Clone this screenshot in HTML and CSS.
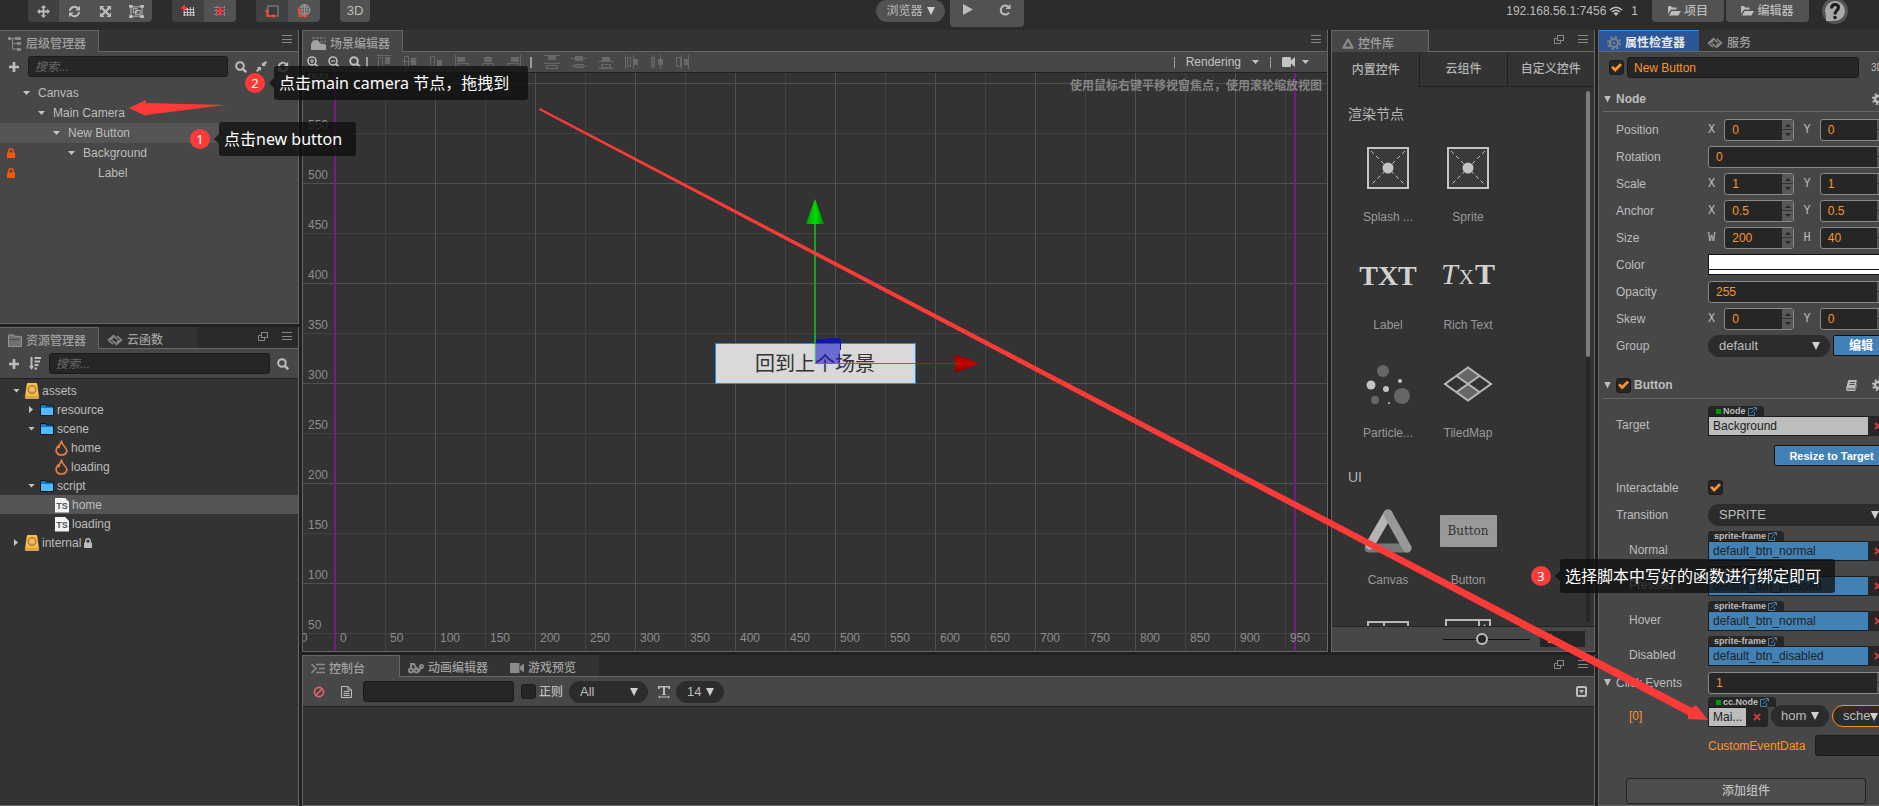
FILE: index.html
```html
<!DOCTYPE html>
<html lang="zh-CN">
<head>
<meta charset="utf-8">
<title>Cocos Creator</title>
<link rel="stylesheet" href="styles.css">
</head>
<body>
<svg class="defs" aria-hidden="true">
  <symbol id="i-move" viewBox="0 0 14 14"><path fill="currentColor" d="M7 0l3 3H8v3h3V4l3 3-3 3V8H8v3h2l-3 3-3-3h2V8H3v2L0 7l3-3v2h3V3H4z"/></symbol>
  <symbol id="i-refresh" viewBox="0 0 14 14"><path fill="none" stroke="currentColor" stroke-width="2" d="M2 6.500A5 5 0 0 1 11 4M12 7.500A5 5 0 0 1 3 10"/><path fill="currentColor" d="M13 .8V6H7.800zM1 13.200V8h5.200z"/></symbol>
  <symbol id="i-scale" viewBox="0 0 14 14"><path stroke="currentColor" stroke-width="2.400" d="M3 3l8 8M11 3l-8 8"/><path fill="currentColor" d="M1 1h5L1 6zM13 1v5L8 1zM1 13V8l5 5zM13 13H8l5-5z"/></symbol>
  <symbol id="i-rect" viewBox="0 0 16 14"><rect x="2" y="2" width="12" height="10" fill="none" stroke="currentColor"/><path fill="currentColor" d="M0 0h4v3H0zM12 0h4v3h-4zM0 11h4v3H0zM12 11h4v3h-4z"/><rect x="4.500" y="4" width="4" height="4" fill="none" stroke="currentColor"/><rect x="7" y="6" width="5" height="4" fill="none" stroke="currentColor"/></symbol>
  <symbol id="i-grid1" viewBox="0 0 14 12"><path stroke="#c4c4c4" fill="none" d="M3 4.500h10M2 7.500h12M2 10h12M3.500 4v7M6.500 3v8M9.500 2v9M12.500 2v9"/><path stroke="#f33" stroke-width="2" d="M0 3h6M3 0v6"/></symbol>
  <symbol id="i-grid2" viewBox="0 0 14 12"><path stroke="#898989" fill="none" stroke-dasharray="2 1" d="M1 2.500h12M1 5.500h12M1 9.500h12M3.500 1v10M11.500 1v10"/><path stroke="#f33" stroke-width="2" d="M3 6h8M7 2v8"/></symbol>
  <symbol id="i-local" viewBox="0 0 14 14"><rect x="3" y="2" width="10" height="10" fill="#3b3b3b" stroke="#8f8f8f"/><path fill="none" stroke="#f44" stroke-width="1.500" d="M2 6v6h7M.5 7.500L2 6l1.500 1.500M8 10.500L9.500 12 8 13.500"/></symbol>
  <symbol id="i-world" viewBox="0 0 14 14"><g fill="none" stroke="#9a9a9a"><circle cx="7.500" cy="6" r="5.500"/><ellipse cx="7.500" cy="6" rx="2.500" ry="5.500"/><path d="M2 6h11M3 3h9M3 9h9M7.500 0v12"/></g><path fill="none" stroke="#f44" stroke-width="1.500" d="M2 5v7h7M.5 6.500L2 5l1.500 1.500M8 10.500L9.500 12 8 13.500"/></symbol>
  <symbol id="i-play" viewBox="0 0 10 11"><path fill="currentColor" d="M0 0l10 5.500L0 11z"/></symbol>
  <symbol id="i-reload" viewBox="0 0 12 12"><path fill="none" stroke="currentColor" stroke-width="2" d="M10 8.500A4.500 4.500 0 1 1 9.500 3"/><path fill="currentColor" d="M11.500 0v5h-5z"/></symbol>
  <symbol id="i-wifi" viewBox="0 0 14 10"><path fill="none" stroke="currentColor" stroke-width="1.600" d="M1 4q6-5.500 12 0M3 6q4-3.500 8 0"/><path fill="currentColor" d="M4.500 7.200q2.500-2 5 0L7 10z"/></symbol>
  <symbol id="i-folder-open" viewBox="0 0 13 10"><path fill="currentColor" d="M0 8V1q0-1 1-1h2l1 1.500h4.500v2H3zM1 9.500L3.500 5H13l-2.500 4.500z"/></symbol>
  <symbol id="i-help" viewBox="0 0 26 26"><circle cx="13" cy="13" r="11.500" fill="#a9a9a9" stroke="#555" stroke-width="3"/><path fill="#a9a9a9" d="M4 15v8h8z"/><path fill="none" stroke="#1d1d1d" stroke-width="3" d="M9.500 10.500q0-4 3.500-4t3.500 3q0 1.500-1.800 3Q13 14 13 16.500"/><circle cx="13" cy="19.500" r="1.800" fill="#1d1d1d"/></symbol>
  <symbol id="i-tree" viewBox="0 0 14 14"><path fill="none" stroke="currentColor" d="M3 1.500h4M4.500 2v10h5M4.500 6.500h5"/><path fill="currentColor" d="M0 0h3v3H0zM7 0h6v3H7zM9 5h4v3H9zM9 11h4v3H9z"/></symbol>
  <symbol id="i-menu" viewBox="0 0 10 9"><path stroke="currentColor" d="M0 .5h10M0 4.500h10M0 7.500h10"/></symbol>
  <symbol id="i-pop" viewBox="0 0 10 9"><rect x="3.500" y=".5" width="6" height="5" fill="none" stroke="currentColor"/><path fill="none" stroke="currentColor" d="M3.500 3.500h-3v5h6v-3"/></symbol>
  <symbol id="i-plus" viewBox="0 0 10 10"><path fill="currentColor" d="M3.700 0h2.600v3.700H10v2.600H6.300V10H3.700V6.300H0V3.700h3.700z"/></symbol>
  <symbol id="i-search" viewBox="0 0 12 12"><circle cx="5" cy="5" r="3.800" fill="none" stroke="currentColor" stroke-width="2"/><path stroke="currentColor" stroke-width="2.400" d="M7.800 7.800L11.200 11.200"/></symbol>
  <symbol id="i-zin" viewBox="0 0 12 12"><circle cx="5" cy="5" r="4" fill="none" stroke="currentColor" stroke-width="1.600"/><path stroke="currentColor" stroke-width="2" d="M8 8l3 3"/><path stroke="currentColor" stroke-width="1.200" d="M3 5h4M5 3v4"/></symbol>
  <symbol id="i-zout" viewBox="0 0 12 12"><circle cx="5" cy="5" r="4" fill="none" stroke="currentColor" stroke-width="1.600"/><path stroke="currentColor" stroke-width="2" d="M8 8l3 3"/><path stroke="currentColor" stroke-width="1.200" d="M3 5h4"/></symbol>
  <symbol id="i-compress" viewBox="0 0 12 12"><path fill="currentColor" d="M6.500 1v4.500H11L9.600 4.100 12 1.500 10.500 0 7.900 2.400zM5.500 11V6.500H1l1.400 1.400L0 10.500 1.500 12l2.600-2.400z"/></symbol>
  <symbol id="i-lock" viewBox="0 0 8 10"><path fill="none" stroke="currentColor" stroke-width="1.500" d="M1.800 5V3q0-2.200 2.200-2.200T6.200 3v2"/><rect y="4.500" width="8" height="5.500" rx=".6" fill="currentColor"/></symbol>
  <symbol id="i-folder" viewBox="0 0 15 14"><path fill="#707070" stroke="#9a9a9a" d="M.5 13V1q0-.5.5-.5h5q1 0 1 1.500h7q.5 0 .5.5V13z"/><path stroke="#444" d="M2 5.500h11"/></symbol>
  <symbol id="i-link" viewBox="0 0 16 12"><path fill="none" stroke="currentColor" stroke-width="1.600" d="M6 10L1.500 6l5-4.500 4 4M10 2l4.500 4-5 4.500-4-4M3.500 6l3-2.500M12.500 6l-3 2.500"/></symbol>
  <symbol id="i-sort" viewBox="0 0 12 13"><path fill="currentColor" d="M1.500 0h2v9H5L2.500 13 0 9h1.500zM5.500 0H12v2H5.500zM5.500 3.500H11v2H5.500zM5.500 7h4v2h-4zM5.500 10.500H8v2H5.500z"/></symbol>
  <symbol id="i-db" viewBox="0 0 14 16"><path fill="#fdc04c" d="M3 0h8q1 0 1.200 1L14 14q0 2-2 2H2q-2 0-2-2L1.800 1Q2 0 3 0z"/><path fill="#dba445" d="M.2 12.500h13.600L14 14q0 2-2 2H2q-2 0-2-2z"/><circle cx="7" cy="6.500" r="3.800" fill="#f4b465" stroke="#a87326" stroke-width="1.300"/></symbol>
  <symbol id="i-dir" viewBox="0 0 14 12"><path fill="#0d7fd0" stroke="#151515" d="M.5 11.500V.5h5l1 1.500h7v9.500z"/><path fill="#4fbaff" d="M1 4h12v7H1z"/></symbol>
  <symbol id="i-fire" viewBox="0 0 13 16"><path fill="none" stroke="#e67d42" stroke-width="1.700" d="M6.500 1.500Q7 4 9.500 6.500t2.300 4.500q-.6 4-5.300 4t-5.300-4Q1 8 3 6l1.200 2Q4 4.500 6.500 1.500z"/></symbol>
  <symbol id="i-play-anim" viewBox="0 0 16 12"><g fill="none" stroke="currentColor" stroke-width="2"><circle cx="3" cy="8.500" r="2"/><circle cx="8.500" cy="8.500" r="2"/><circle cx="13.500" cy="4.500" r="1.500"/><path d="M3 6V2h3l2 4 3 3 2-3"/></g></symbol>
  <symbol id="i-cam" viewBox="0 0 14 10"><path fill="currentColor" d="M0 0h9.500v10H0zM14 .5v9L10 6.500v-3z"/></symbol>
  <symbol id="i-cam2" viewBox="0 0 13 10"><path fill="currentColor" d="M1.500 0h6Q9 0 9 1.500V3.500L13 0v10L9 6.500V8.500Q9 10 7.500 10h-6Q0 10 0 8.500v-7Q0 0 1.500 0z"/></symbol>
  <symbol id="i-console" viewBox="0 0 14 12"><path fill="none" stroke="currentColor" stroke-width="1.600" d="M.5 1L5 5.500.5 10M5 1.500h9M8 5.500h6M5 9.500h9"/></symbol>
  <symbol id="i-pic" viewBox="0 0 15 15"><path stroke="#686868" stroke-dasharray="3 1" stroke-width="2" d="M1 2h14M1 5.500h14"/><path fill="#a2a2a2" d="M0 14V8q2-4 5-4 2.500 0 4 3l2 1q2-1 4 1v5z"/></symbol>
  <symbol id="i-tri" viewBox="0 0 12 11"><path fill="none" stroke="currentColor" stroke-width="2.200" stroke-linejoin="round" d="M6 1.500L10.700 9.700H1.300z"/></symbol>
  <symbol id="i-gear" viewBox="0 0 14 14"><circle cx="7" cy="7" r="4" fill="none" stroke="currentColor" stroke-width="2"/><circle cx="7" cy="7" r="6" fill="none" stroke="currentColor" stroke-width="2" stroke-dasharray="2.400 2.310"/><circle cx="7" cy="7" r="1.200" fill="currentColor"/></symbol>
  <symbol id="i-cog" viewBox="0 0 12 12"><circle cx="6" cy="6" r="3" fill="none" stroke="currentColor" stroke-width="2.400"/><circle cx="6" cy="6" r="5" fill="none" stroke="currentColor" stroke-width="2" stroke-dasharray="1.960 1.960"/></symbol>
  <symbol id="i-book" viewBox="0 0 11 11"><path fill="currentColor" d="M3 0h7.500q.5 0 .4.600L9 8.500H2q-1 .2-.8 1h8L10.800 3v2L9.300 11H1.200Q-.2 10.500.1 8.500L2 1Q2.300 0 3 0z"/><path stroke="#474747" d="M4 2.500h5M3.500 4.500h5"/></symbol>
  <symbol id="i-ext" viewBox="0 0 9 9"><path fill="none" stroke="currentColor" d="M5 1.500H.5v7h6V5M3 6l5-5M5.500.5h3v3"/></symbol>
  <symbol id="i-x" viewBox="0 0 8 8"><path stroke="#c53b3b" stroke-width="2.200" d="M1 1l6 6M7 1L1 7"/></symbol>
  <symbol id="i-clear" viewBox="0 0 12 12"><circle cx="6" cy="6" r="4.600" fill="none" stroke="#e2656c" stroke-width="1.700"/><path stroke="#e2656c" stroke-width="1.700" d="M9 3L3 9"/></symbol>
  <symbol id="i-file" viewBox="0 0 11 12"><path fill="none" stroke="currentColor" d="M.5.5H7L10.500 4v7.500H.5zM7 .5V4h3.500M2.500 5.500h6M2.500 7.500h6M2.500 9.500h6"/></symbol>
  <symbol id="i-text" viewBox="0 0 12 12"><path fill="currentColor" d="M0 0h12v3h-1.500l-.3-1.500H7V8h1v1H4V8h1V1.500H1.800L1.500 3H0zM0 11l2-1.500v1h8v-1L12 11l-2 1.500v-1H2v1z"/></symbol>
  <symbol id="i-boxdown" viewBox="0 0 11 11"><rect x="1" y="1" width="9" height="9" rx="1" fill="none" stroke="currentColor" stroke-width="2"/><path fill="currentColor" d="M3 4h5L5.500 7.500z"/></symbol>
  <symbol id="i-al1" viewBox="0 0 14 14"><path d="M0 .5h14M1.500 2.500h4v10h-4z" fill="none" stroke="currentColor"/><path fill="currentColor" d="M8 2h5v7H8z"/></symbol>
  <symbol id="i-al2" viewBox="0 0 14 14"><path d="M0 6.500h14M1.500 1.500h4v11h-4z" fill="none" stroke="currentColor"/><path fill="currentColor" d="M8 3h5v7H8z"/></symbol>
  <symbol id="i-al3" viewBox="0 0 14 14"><path d="M0 13.500h14M1.500 1.500h4v10h-4z" fill="none" stroke="currentColor"/><path fill="currentColor" d="M8 5h5v7H8z"/></symbol>
  <symbol id="i-al4" viewBox="0 0 14 14"><path d="M.5 0v14M2.500 8.500h11v4h-11z" fill="none" stroke="currentColor"/><path fill="currentColor" d="M2 2h8v5H2z"/></symbol>
  <symbol id="i-al5" viewBox="0 0 14 14"><path d="M7 0v14M1.500 8.500h11v4h-11z" fill="none" stroke="currentColor"/><path fill="currentColor" d="M3 2h8v5H3z"/></symbol>
  <symbol id="i-al6" viewBox="0 0 14 14"><path d="M13.500 0v14M.5 8.500h11v4H.5z" fill="none" stroke="currentColor"/><path fill="currentColor" d="M4 2h8v5H4z"/></symbol>
  <symbol id="i-ds1" viewBox="0 0 16 14"><path d="M0 .5h16M0 8.500h16M2.500 10.500h11v3h-11z" fill="none" stroke="currentColor"/><path fill="currentColor" d="M4 1h8v4H4z"/></symbol>
  <symbol id="i-ds2" viewBox="0 0 16 14"><path d="M0 3.500h16M0 11h16M3.500 9.500h9v3h-9z" fill="none" stroke="currentColor"/><path fill="currentColor" d="M4 1h8v5H4z"/></symbol>
  <symbol id="i-ds3" viewBox="0 0 16 14"><path d="M0 6.500h16M0 13.500h16M3.500 9.500h9v3h-9z" fill="none" stroke="currentColor"/><path fill="currentColor" d="M4 2h8v4H4z"/></symbol>
  <symbol id="i-ds4" viewBox="0 0 14 14"><path d="M.5 0v14M8.500 0v14M2.500 2.500h3v9h-3z" fill="none" stroke="currentColor"/><path fill="currentColor" d="M9 4h4v6H9z"/></symbol>
  <symbol id="i-ds5" viewBox="0 0 14 14"><path d="M3 0v14M10.500 0v14M1.500 2.500h3v9h-3z" fill="none" stroke="currentColor"/><path fill="currentColor" d="M8 4h5v6H8z"/></symbol>
  <symbol id="i-ds6" viewBox="0 0 14 14"><path d="M6.500 0v14M13.500 0v14M1.500 2.500h4v9h-4z" fill="none" stroke="currentColor"/><path fill="currentColor" d="M9 4h4v6H9z"/></symbol>
  <symbol id="i-splash" viewBox="0 0 42 42"><rect x="1" y="1" width="40" height="40" fill="#3a3a3a" stroke="#c4c4c4" stroke-width="2"/><path stroke="#c4c4c4" stroke-dasharray="4 3" d="M4 4l34 34M38 4L4 38"/><circle cx="21" cy="21" r="5.500" fill="#c4c4c4"/></symbol>
  <symbol id="i-particle" viewBox="0 0 44 40"><g fill="#666"><circle cx="17" cy="7" r="6"/><circle cx="36" cy="32" r="8"/><circle cx="9" cy="36" r="4"/></g><g fill="#c4c4c4"><circle cx="5" cy="21" r="4.500"/><circle cx="20" cy="25" r="3"/><circle cx="34" cy="17" r="2"/><circle cx="23" cy="39" r="1"/></g></symbol>
  <symbol id="i-tiled" viewBox="0 0 50 36"><path fill="#666" d="M25 2l11 8-11 8-11-8zM25 18l11 8-11 8-11-8z"/><path fill="none" stroke="#b8b8b8" stroke-width="2" d="M25 1.500L48 18 25 34.500 2 18zM13.500 10L36.500 26M36.500 10L13.500 26"/></symbol>
  <symbol id="i-canvas" viewBox="0 0 48 44"><path stroke="#777" stroke-width="9" stroke-linecap="round" d="M5 39h38"/><path stroke="#b5b5b5" stroke-width="9" stroke-linecap="round" d="M24 5L6 36"/><path stroke="#999" stroke-width="9" stroke-linecap="round" d="M24 5l19 34"/></symbol>
  <symbol id="i-layout" viewBox="0 0 42 36"><path fill="none" stroke="#b8b8b8" stroke-width="2" d="M1 1h40v34H1zM17 1v34"/></symbol>
  <symbol id="i-scroll" viewBox="0 0 46 40"><path fill="none" stroke="#b8b8b8" stroke-width="2" d="M1 1h44v38H1zM34 1v38"/><path fill="#b8b8b8" d="M37 9l2.500-4L42 9z"/></symbol>
</svg>

<div class="app">
  <header class="topbar">
    <div class="tb-left">
      <div class="group"><button class="on" aria-label="移动"><svg width="13" height="13"><use href="#i-move"/></svg></button><button aria-label="旋转"><svg width="13" height="13"><use href="#i-refresh"/></svg></button><button aria-label="缩放"><svg width="13" height="13"><use href="#i-scale"/></svg></button><button aria-label="矩形"><svg width="15" height="13"><use href="#i-rect"/></svg></button></div>
      <div class="group"><button class="on" aria-label="锚点"><svg width="14" height="12"><use href="#i-grid1"/></svg></button><button aria-label="中心"><svg width="14" height="12"><use href="#i-grid2"/></svg></button></div>
      <div class="group"><button class="on" aria-label="本地"><svg width="14" height="14"><use href="#i-local"/></svg></button><button aria-label="世界"><svg width="14" height="14"><use href="#i-world"/></svg></button></div>
      <div class="group"><button class="b3d">3D</button></div>
    </div>
    <div class="tb-mid">
      <label class="sel sel-top"><select aria-label="预览平台"><option>浏览器</option></select></label>
      <div class="group play"><button aria-label="播放"><svg width="10" height="11"><use href="#i-play"/></svg></button><button aria-label="刷新"><svg width="12" height="12"><use href="#i-reload"/></svg></button></div>
    </div>
    <div class="tb-right">
      <span class="ip">192.168.56.1:7456</span><svg class="wifi" width="14" height="10"><use href="#i-wifi"/></svg><span class="cnt">1</span>
      <button class="tbtn"><svg width="13" height="10"><use href="#i-folder-open"/></svg>项目</button><button class="tbtn wide"><svg width="13" height="10"><use href="#i-folder-open"/></svg>编辑器</button>
      <button class="help" aria-label="帮助"><svg width="26" height="26"><use href="#i-help"/></svg></button>
    </div>
  </header>

  <main class="dock">
    <div class="col-left">
      <section class="panel">
        <div class="tabs"><button class="tab on"><svg width="14" height="14"><use href="#i-tree"/></svg>层级管理器</button><div class="rest"><svg width="10" height="9"><use href="#i-menu"/></svg></div></div>
        <div class="bar hbar"><button class="ib" aria-label="新建"><svg width="10" height="10"><use href="#i-plus"/></svg></button><input class="search" type="text" placeholder="搜索..." aria-label="搜索节点"><button class="ib" aria-label="搜索"><svg width="12" height="12"><use href="#i-search"/></svg></button><button class="ib" aria-label="折叠"><svg width="11" height="11"><use href="#i-compress"/></svg></button><button class="ib" aria-label="刷新"><svg width="12" height="12"><use href="#i-refresh"/></svg></button></div>
        <ul class="tree nodes">
          <li class="d0"><i class="lk"></i><i class="car"></i>Canvas</li>
          <li class="d1"><i class="lk"></i><i class="car"></i>Main Camera</li>
          <li class="d2 sel-row"><i class="lk"></i><i class="car"></i>New Button</li>
          <li class="d3"><i class="lk"><svg width="8" height="10"><use href="#i-lock"/></svg></i><i class="car"></i>Background</li>
          <li class="d4"><i class="lk"><svg width="8" height="10"><use href="#i-lock"/></svg></i><i class="car none"></i>Label</li>
        </ul>
      </section>
      <section class="panel dark">
        <div class="tabs"><button class="tab on"><svg width="14" height="14"><use href="#i-folder"/></svg>资源管理器</button><button class="tab w98"><svg width="16" height="12"><use href="#i-link"/></svg>云函数</button><div class="rest deep"><svg width="10" height="9"><use href="#i-pop"/></svg><svg width="10" height="9"><use href="#i-menu"/></svg></div></div>
        <div class="bar abar"><button class="ib" aria-label="新建"><svg width="10" height="10"><use href="#i-plus"/></svg></button><button class="ib" aria-label="排序"><svg width="12" height="13"><use href="#i-sort"/></svg></button><input class="search" type="text" placeholder="搜索..." aria-label="搜索资源"><button class="ib" aria-label="搜索"><svg width="12" height="12"><use href="#i-search"/></svg></button></div>
        <ul class="tree assets">
          <li class="d0"><i class="car"></i><svg width="14" height="16"><use href="#i-db"/></svg>assets</li>
          <li class="d1"><i class="car shut"></i><svg width="14" height="12"><use href="#i-dir"/></svg>resource</li>
          <li class="d1"><i class="car"></i><svg width="14" height="12"><use href="#i-dir"/></svg>scene</li>
          <li class="d2"><i class="car none"></i><svg width="13" height="16"><use href="#i-fire"/></svg>home</li>
          <li class="d2"><i class="car none"></i><svg width="13" height="16"><use href="#i-fire"/></svg>loading</li>
          <li class="d1"><i class="car"></i><svg width="14" height="12"><use href="#i-dir"/></svg>script</li>
          <li class="d2 sel-row"><i class="car none"></i><span class="ts">TS</span>home</li>
          <li class="d2"><i class="car none"></i><span class="ts">TS</span>loading</li>
          <li class="d0"><i class="car shut"></i><svg width="14" height="16"><use href="#i-db"/></svg>internal<svg class="lk2" width="8" height="10"><use href="#i-lock"/></svg></li>
        </ul>
      </section>
    </div>

    <div class="col-mid">
      <div class="mid-top">
        <section class="panel dark lb">
          <div class="tabs"><button class="tab on"><svg width="15" height="15"><use href="#i-pic"/></svg>场景编辑器</button><div class="rest"><svg width="10" height="9"><use href="#i-menu"/></svg></div></div>
          <div class="bar sbar">
            <svg width="12" height="12"><use href="#i-zin"/></svg><svg width="12" height="12"><use href="#i-zout"/></svg><svg width="12" height="12"><use href="#i-search"/></svg><i class="sep"></i>
            <span class="aligns"><svg width="14" height="14"><use href="#i-al1"/></svg><svg width="14" height="14"><use href="#i-al2"/></svg><svg width="14" height="14"><use href="#i-al3"/></svg><svg width="14" height="14"><use href="#i-al4"/></svg><svg width="14" height="14"><use href="#i-al5"/></svg><svg width="14" height="14"><use href="#i-al6"/></svg></span><i class="sep"></i>
            <span class="aligns spread"><svg width="16" height="14"><use href="#i-ds1"/></svg><svg width="16" height="14"><use href="#i-ds2"/></svg><svg width="16" height="14"><use href="#i-ds3"/></svg><svg width="14" height="14"><use href="#i-ds4"/></svg><svg width="14" height="14"><use href="#i-ds5"/></svg><svg width="14" height="14"><use href="#i-ds6"/></svg></span>
            <span class="sright"><i class="sep"></i><span>Rendering</span><i class="car"></i><i class="sep"></i><span class="cam"><svg width="13" height="10"><use href="#i-cam2"/></svg><i class="car"></i></span></span>
          </div>
          <div class="scene">
            <svg class="view" width="100%" height="100%">
              <defs>
                <pattern id="fine" width="100" height="100" x="32" y="10" patternUnits="userSpaceOnUse"><path stroke="#424242" stroke-width="1" d="M50.500 0v100M0 50.500h100"/><path stroke="#505050" stroke-width="1" d="M.5 0v100M0 .5h100"/></pattern>
                <linearGradient id="gg"><stop offset="0" stop-color="#009a00"/><stop offset=".5" stop-color="#00dd00"/><stop offset="1" stop-color="#008a00"/></linearGradient>
                <linearGradient id="rg" x2="0" y2="1"><stop offset="0" stop-color="#8d0000"/><stop offset=".5" stop-color="#cc0000"/><stop offset="1" stop-color="#7d0000"/></linearGradient>
              </defs>
              <rect width="100%" height="100%" fill="url(#fine)"/>
              <path stroke="#761c86" stroke-width="2" d="M32 0v580M992 0v580"/>
              <g class="ruler">
                <text x="5" y="6">600</text><text x="5" y="56">550</text><text x="5" y="106">500</text><text x="5" y="156">450</text><text x="5" y="206">400</text><text x="5" y="256">350</text><text x="5" y="306">300</text><text x="5" y="356">250</text><text x="5" y="406">200</text><text x="5" y="456">150</text><text x="5" y="506">100</text><text x="5" y="556">50</text>
                <text x="-13" y="569">-50</text><text x="37" y="569">0</text><text x="87" y="569">50</text><text x="137" y="569">100</text><text x="187" y="569">150</text><text x="237" y="569">200</text><text x="287" y="569">250</text><text x="337" y="569">300</text><text x="387" y="569">350</text><text x="437" y="569">400</text><text x="487" y="569">450</text><text x="537" y="569">500</text><text x="587" y="569">550</text><text x="637" y="569">600</text><text x="687" y="569">650</text><text x="737" y="569">700</text><text x="787" y="569">750</text><text x="837" y="569">800</text><text x="887" y="569">850</text><text x="937" y="569">900</text><text x="987" y="569">950</text>
              </g>
              <rect x="412.500" y="270.500" width="200" height="40" fill="#d9d9d9" stroke="#1a90e8"/>
              <text class="gbtn" x="512" y="298" text-anchor="middle">回到上个场景</text>
              <path fill="#1212c8" fill-opacity=".55" d="M512 266h25v24h-25z"/><path fill="#1414a8" d="M512 266h13v-1h13v12h-1v-7h-25z"/>
              <path stroke="#1da01d" stroke-width="2" d="M512 150v121"/><path stroke="#6adf6a" stroke-width="1" d="M512 271v20"/>
              <path stroke="#e04040" d="M512 290.500h101"/><path stroke="#b01818" d="M613 290.500h40"/>
              <path fill="url(#gg)" d="M512 126l9 25h-18z"/><path fill="url(#rg)" d="M676 290.500l-24-9.500v19z"/>
            </svg>
            <p class="hint">使用鼠标右键平移视窗焦点，使用滚轮缩放视图</p>
          </div>
        </section>

        <section class="panel dark lb widgets">
          <div class="tabs"><button class="tab on w97"><svg width="12" height="11"><use href="#i-tri"/></svg>控件库</button><div class="rest"><svg width="10" height="9"><use href="#i-pop"/></svg><svg width="10" height="9"><use href="#i-menu"/></svg></div></div>
          <div class="subtabs"><button class="on">内置控件</button><button>云组件</button><button>自定义控件</button></div>
          <div class="wscroll">
            <div class="wlist">
              <h3>渲染节点</h3>
              <div class="wgrid">
                <figure><div><svg width="42" height="42"><use href="#i-splash"/></svg></div><figcaption>Splash ...</figcaption></figure>
                <figure><div><svg width="42" height="42"><use href="#i-splash"/></svg></div><figcaption>Sprite</figcaption></figure>
                <figure><div class="txt">TXT</div><figcaption>Label</figcaption></figure>
                <figure><div class="txt"><span class="rich"><em>T</em><small>X</small><strong>T</strong></span></div><figcaption>Rich Text</figcaption></figure>
                <figure><div><svg width="44" height="40"><use href="#i-particle"/></svg></div><figcaption>Particle...</figcaption></figure>
                <figure><div><svg width="50" height="36"><use href="#i-tiled"/></svg></div><figcaption>TiledMap</figcaption></figure>
              </div>
              <h3>UI</h3>
              <div class="wgrid">
                <figure><div><svg width="48" height="44"><use href="#i-canvas"/></svg></div><figcaption>Canvas</figcaption></figure>
                <figure><div><span class="wbtn">Button</span></div><figcaption>Button</figcaption></figure>
                <figure><div><svg width="42" height="36"><use href="#i-layout"/></svg></div></figure>
                <figure><div><svg width="46" height="40"><use href="#i-scroll"/></svg></div></figure>
              </div>
            </div>
            <div class="track"><i></i></div>
          </div>
          <div class="wfoot"><input type="range" min="0" max="100" value="44" aria-label="图标大小"><input class="wnum" type="text" value="1" aria-label="缩放值"></div>
        </section>
      </div>

      <section class="panel dark lb">
        <div class="tabs"><button class="tab on w97"><svg width="14" height="12"><use href="#i-console"/></svg>控制台</button><button class="tab w102"><svg width="16" height="12"><use href="#i-play-anim"/></svg>动画编辑器</button><button class="tab w97"><svg width="14" height="10"><use href="#i-cam"/></svg>游戏预览</button><div class="rest deep"><svg width="10" height="9"><use href="#i-pop"/></svg><svg width="10" height="9"><use href="#i-menu"/></svg></div></div>
        <div class="bar cbar">
          <button class="ib" aria-label="清空"><svg width="12" height="12"><use href="#i-clear"/></svg></button><button class="ib" aria-label="日志"><svg width="11" height="12"><use href="#i-file"/></svg></button>
          <input class="search filter" type="text" aria-label="过滤">
          <label class="chk"><input type="checkbox">正则</label>
          <label class="sel sel-all"><select aria-label="日志级别"><option>All</option></select></label>
          <svg class="ti" width="12" height="12"><use href="#i-text"/></svg>
          <label class="sel sel-14"><select aria-label="字号"><option>14</option></select></label>
          <button class="ib last" aria-label="合并"><svg width="11" height="11"><use href="#i-boxdown"/></svg></button>
        </div>
        <div class="log"></div>
      </section>
    </div>

    <section class="panel lb insp">
      <div class="tabs"><button class="tab blue"><svg width="14" height="14"><use href="#i-gear"/></svg>属性检查器</button><button class="tab"><svg width="16" height="12"><use href="#i-link"/></svg>服务</button><div class="rest"></div></div>
      <div class="ibody">
        <div class="name"><input type="checkbox" checked aria-label="激活"><input class="field" type="text" value="New Button" aria-label="节点名"><span>3D</span></div>
        <h2 class="sect top"><i class="tri"></i>Node<svg class="cog" width="12" height="12"><use href="#i-cog"/></svg></h2>
        <div class="rows">
          <div class="row"><span class="lab">Position</span><div class="xy"><label>X<span class="num"><input value="0"><i></i></span></label><label>Y<span class="num"><input value="0"><i></i></span></label></div></div>
          <div class="row"><label class="lab" for="rot">Rotation</label><span class="num"><input id="rot" value="0"><i></i></span></div>
          <div class="row"><span class="lab">Scale</span><div class="xy"><label>X<span class="num"><input value="1"><i></i></span></label><label>Y<span class="num"><input value="1"><i></i></span></label></div></div>
          <div class="row"><span class="lab">Anchor</span><div class="xy"><label>X<span class="num"><input value="0.5"><i></i></span></label><label>Y<span class="num"><input value="0.5"><i></i></span></label></div></div>
          <div class="row"><span class="lab">Size</span><div class="xy"><label>W<span class="num"><input value="200"><i></i></span></label><label>H<span class="num"><input value="40"><i></i></span></label></div></div>
          <div class="row"><span class="lab">Color</span><button class="color" aria-label="Color"><i></i></button></div>
          <div class="row"><label class="lab" for="opa">Opacity</label><span class="num"><input id="opa" value="255"><i></i></span></div>
          <div class="row"><span class="lab">Skew</span><div class="xy"><label>X<span class="num"><input value="0"><i></i></span></label><label>Y<span class="num"><input value="0"><i></i></span></label></div></div>
          <div class="row"><label class="lab" for="grp">Group</label><span class="sel grp"><select id="grp"><option>default</option></select></span><button class="blueb edit">编辑</button></div>
        </div>
        <h2 class="sect comp"><i class="tri"></i><input type="checkbox" checked aria-label="启用 Button">Button<svg class="book" width="11" height="11"><use href="#i-book"/></svg><svg class="cog" width="12" height="12"><use href="#i-cog"/></svg></h2>
        <div class="ref first"><span class="lab">Target</span><div class="slot node"><span class="tag"><b></b>Node<svg width="9" height="9"><use href="#i-ext"/></svg></span><span class="val">Background</span><button class="del" aria-label="移除"><svg width="8" height="8"><use href="#i-x"/></svg></button></div></div>
        <button class="blueb resize">Resize to Target</button>
        <div class="rows two">
          <div class="row"><label class="lab" for="inter">Interactable</label><input id="inter" type="checkbox" checked></div>
          <div class="row"><label class="lab" for="tran">Transition</label><span class="sel tran"><select id="tran"><option>SPRITE</option></select></span></div>
        </div>
        <div class="refs">
          <div class="ref in"><span class="lab">Normal</span><div class="slot"><span class="tag">sprite-frame<svg width="9" height="9"><use href="#i-ext"/></svg></span><span class="val">default_btn_normal</span><button class="del" aria-label="移除"><svg width="8" height="8"><use href="#i-x"/></svg></button></div></div>
          <div class="ref in"><span class="lab">Pressed</span><div class="slot"><span class="tag">sprite-frame<svg width="9" height="9"><use href="#i-ext"/></svg></span><span class="val">default_btn_pressed</span><button class="del" aria-label="移除"><svg width="8" height="8"><use href="#i-x"/></svg></button></div></div>
          <div class="ref in"><span class="lab">Hover</span><div class="slot"><span class="tag">sprite-frame<svg width="9" height="9"><use href="#i-ext"/></svg></span><span class="val">default_btn_normal</span><button class="del" aria-label="移除"><svg width="8" height="8"><use href="#i-x"/></svg></button></div></div>
          <div class="ref in"><span class="lab">Disabled</span><div class="slot"><span class="tag">sprite-frame<svg width="9" height="9"><use href="#i-ext"/></svg></span><span class="val">default_btn_disabled</span><button class="del" aria-label="移除"><svg width="8" height="8"><use href="#i-x"/></svg></button></div></div>
        </div>
        <div class="rows ev"><div class="row"><i class="tri"></i><label class="lab" for="cev">Click Events</label><span class="num"><input id="cev" value="1"><i></i></span></div></div>
        <div class="ref in evt"><span class="lab hot">[0]</span><div class="slot node small"><span class="tag"><b></b>cc.Node<svg width="9" height="9"><use href="#i-ext"/></svg></span><span class="val">Mai...</span><button class="del" aria-label="移除"><svg width="8" height="8"><use href="#i-x"/></svg></button></div><span class="sel s1"><select aria-label="组件"><option>home</option></select></span><span class="sel s2"><select aria-label="函数"><option>sche</option></select></span></div>
        <div class="custom"><label for="ced">CustomEventData</label><input id="ced" class="field" type="text"></div>
        <button class="add">添加组件</button>
      </div>
    </section>
  </main>
</div>

<div class="notes">
  <svg width="100%" height="100%"><path fill="#fc3a38" d="M225 105L146 115v1l-17-8 17-8v3zM539 110l1-2L1692 708l4-3 12 15-20-1 0-4z"/></svg>
  <div class="note n1"><b>1</b><span>点击new button</span></div>
  <div class="note n2"><b>2</b><span>点击main camera 节点，拖拽到</span></div>
  <div class="note n3"><b>3</b><span>选择脚本中写好的函数进行绑定即可</span></div>
</div>
</body>
</html>
```
FILE: styles.css
```css
* { box-sizing: border-box; }
html, body { height: 100%; }
body {
  margin: 0; overflow: hidden; background: #202020; color: #bdbdbd;
  font: 12px/16px "Liberation Sans", "Noto Sans CJK SC", sans-serif;
}
button, input, select { font: inherit; color: inherit; margin: 0; padding: 0; border: 0; background: none; border-radius: 0; outline: 0; }
svg { display: block; flex: none; }
.defs { position: absolute; width: 0; height: 0; }
i { font-style: normal; }

/* the inspector's right edge runs past the window */
.app { display: flex; flex-direction: column; width: calc(100% + 20px); height: 100vh; }

/* top bar */
.topbar { display: grid; grid-template-columns: 1fr auto 1fr; height: 30px; flex: none; background: #2c2c2c; }
.tb-left { display: flex; gap: 20px; padding-left: 28px; }
.group { display: flex; height: 22px; background: #525252; border-radius: 0 0 4px 4px; overflow: hidden; }
.group button { width: 32px; display: grid; place-items: center; }
.group:first-child button { width: 31px; }
.group button.on { background: #414141; }
.group .b3d { width: 30px; font-size: 13px; }
.tb-mid { display: flex; gap: 5px; }
.play { height: 27px; }
.play button { width: 37px; padding-bottom: 8px; }
.tb-right { display: flex; justify-content: flex-end; padding-right: 51px; height: 22px; align-items: center; }
.wifi { margin: 0 8px 0 3px; }
.cnt { margin-right: 14px; }
.tbtn { width: 72px; height: 22px; display: flex; align-items: center; justify-content: center; gap: 3px; background: #525252; border-radius: 0 0 4px 4px; margin-right: 2px; font-weight: 500; }
.tbtn.wide { width: 83px; margin-right: 13px; }

/* selects */
.sel { position: relative; display: block; height: 22px; background: #2c2c2c; border-radius: 11px; }
.sel select { appearance: none; width: 100%; height: 100%; padding-left: 11px; font-size: 13px; }
.sel::after { content: ""; position: absolute; right: 10px; top: 7px; border: 4px solid transparent; border-top: 8px solid #cfcfcf; border-bottom: 0; pointer-events: none; }
.sel-top { width: 69px; background: #525252; }
.sel-top select { font-size: 12px; }

/* dock */
.dock { flex: 1; min-height: 0; display: grid; grid-template-columns: 299px minmax(0, 1fr) 301px; gap: 3px; }
.col-left { display: grid; grid-template-rows: 294fr 479fr; gap: 3px; min-height: 0; }
.col-mid { display: grid; grid-template-rows: 622fr 151fr; gap: 3px; min-height: 0; min-width: 0; }
.mid-top { display: grid; grid-template-columns: minmax(0, 1fr) 264px; gap: 3px; min-height: 0; }
.panel { display: flex; flex-direction: column; min-height: 0; min-width: 0; overflow: hidden; background: #474747; border: 1px solid #666; border-width: 0 1px 1px 0; }
.panel.lb { border-left-width: 1px; }
.panel.dark { background: #333; }
.tabs { display: flex; height: 22px; flex: none; background: #333; }
.tab { display: flex; align-items: center; gap: 4px; padding: 4px 12px 0 8px; color: #a0a0a0; font-weight: 500; border-bottom: 1px solid #666; white-space: nowrap; }
.tab.on { background: #474747; border: 1px solid #666; border-width: 1px 1px 0 0; }
.tab.blue { background: #2c5698; color: #e8e8e8; border-top: 1px solid #2f8ae8; padding-right: 14px; font-weight: 700; }
.tab.blue svg { color: #7b8187; }
.tab svg { color: #8a8a8a; }
.widgets .tab { padding-left: 10px; }
.w97 { width: 97px; } .w98 { width: 98px; } .w102 { width: 102px; }
.rest { flex: 1; display: flex; justify-content: flex-end; gap: 14px; padding: 5px 6px 0 0; border-bottom: 1px solid #666; color: #888; }
.rest.deep { background: #2a2a2a; }
.bar { display: flex; align-items: center; flex: none; background: #474747; }
.ib { display: grid; place-items: center; width: 21px; height: 21px; }
.search, .field { height: 21px; background: #262626; border: 1px solid #1b1b1b; border-radius: 3px; padding: 0 6px; }
.search::placeholder { color: #686868; font-style: italic; opacity: 1; }
.hbar { height: 29px; padding: 0 5px 0 3px; }
.hbar .search { flex: 1; margin: 0 2px 0 4px; }
.abar { height: 30px; padding: 0 5px 0 3px; border-bottom: 1px solid #222; }
.abar .ib:nth-child(2) { margin: 0 4px 0 0; }
.abar .search { flex: 1; margin-right: 2px; }

/* trees */
.tree { list-style: none; margin: 0; padding: 0; }
.tree li { display: flex; align-items: center; }
.sel-row { background: #555; }
.nodes { padding-top: 2px; }
.nodes li { height: 20px; }
.lk { width: 20px; padding-left: 7px; color: #fb5607; }
.car { width: 7px; height: 4px; margin-right: 8px; background: #c4c4c4; clip-path: polygon(0 0, 100% 0, 50% 100%); flex: none; }
.car.none { visibility: hidden; }
.nodes .car { margin-left: 3px; }
.nodes .d1 .car { margin-left: 18px; }
.nodes .d2 .car { margin-left: 33px; }
.nodes .d3 .car { margin-left: 48px; }
.nodes .d4 .car { margin-left: 63px; }
.assets { padding-top: 2px; }
.assets li { height: 19px; gap: 3px; padding-left: 13px; }
.assets .d1 { padding-left: 28px; }
.assets .d2 { padding-left: 43px; }
.assets .car { margin-right: 2px; }
.assets .shut { width: 4px; height: 7px; margin: 0 4px 0 1px; clip-path: polygon(0 0, 100% 50%, 0 100%); }
.ts { width: 14px; height: 15px; margin-top: 1px; background: #f2f2f2; color: #555; font: bold 9px/17px "Liberation Sans", sans-serif; text-align: center; clip-path: polygon(0 0, 70% 0, 100% 30%, 100% 100%, 0 100%); }

/* scene */
.sbar { height: 21px; padding: 0 18px 0 4px; gap: 9px; border-bottom: 1px solid #222; }
.sep { width: 2px; height: 11px; background: #9d9d9d; flex: none; }
.sbar > .sep:first-of-type { margin-left: -4px; }
.aligns { display: flex; gap: 12px; }
.aligns svg { color: #686868; }
.spread { gap: 11px; margin-left: 3px; }
.sright { margin-left: auto; display: flex; align-items: center; gap: 11px; color: #c4c4c4; }
.sright .car { margin: 0; width: 7px; }
.sright .sep { width: 1px; }
.cam { display: flex; align-items: center; gap: 7px; }
.scene { position: relative; flex: 1; min-height: 0; overflow: hidden; }
.view { position: absolute; inset: 0; }
.ruler text { font: 12px "Liberation Sans", sans-serif; fill: #8d8d8d; }
.gbtn { font: 20px "Noto Sans CJK SC", sans-serif; fill: #333; }
.hint { position: relative; margin: 0; padding: 5px 5px 0 0; text-align: right; font-weight: 700; color: #858585; }

/* widget library */
.subtabs { display: grid; grid-template-columns: repeat(3, 1fr); height: 35px; flex: none; background: #333; }
.subtabs button { border: 1px solid #222; border-width: 0 0 1px 1px; color: #b4b4b4; font-weight: 500; }
.subtabs .on { border: 0; }
.wscroll { flex: 1; min-height: 0; display: flex; overflow: hidden; }
.wlist { flex: 1; min-height: 0; padding-top: 15px; }
.wlist h3 { margin: 0 0 0 16px; font: 14px/24px "Liberation Sans", "Noto Sans CJK SC", sans-serif; color: #b4b4b4; }
.wgrid { display: grid; grid-template-columns: 80px 80px; padding-left: 16px; margin-bottom: 15px; }
.wgrid figure { margin: 0; height: 108px; text-align: center; color: #999; }
.wgrid figure > div { height: 83px; display: grid; place-items: center; }
.wgrid .txt { font: bold 28px/32px "Liberation Serif", serif; color: #d2d2d2; }
.rich { display: flex; align-items: baseline; gap: 1px; font-size: 30px; }
.rich em { font-weight: 400; }
.rich small { font-size: 21px; font-weight: 400; }
.wbtn { width: 57px; height: 32px; background: #999; color: #333; font: 12px/32px "DejaVu Serif", serif; border-radius: 1px; }
.track { width: 4px; margin: 4px 4px 4px 0; background: #272727; }
.track i { display: block; height: 50%; background: #7d7d7d; border-radius: 2px; }
.wfoot { height: 25px; flex: none; display: flex; align-items: center; justify-content: flex-end; gap: 10px; padding-right: 9px; background: #474747; border-top: 1px solid #222; }
.wfoot input[type=range] { appearance: none; width: 87px; height: 12px; background: linear-gradient(#111, #111) center / 100% 1px no-repeat; }
.wfoot input[type=range]::-webkit-slider-thumb { appearance: none; width: 12px; height: 12px; border: 2px solid #bdbdbd; border-radius: 50%; background: #262626; }
.wnum { width: 45px; height: 16px; background: #262626; color: #fd942b; padding-left: 7px; }

/* console */
.cbar { height: 30px; padding-left: 5px; border-bottom: 1px solid #222; }
.cbar .ib:nth-child(2) { margin-left: 7px; }
.filter { width: 151px; margin: 0 7px 0 6px; }
.chk { display: flex; align-items: center; gap: 3px; font-weight: 500; }
.sel-all { width: 79px; margin: 0 10px 0 6px; }
.sel-14 { width: 48px; margin-left: 6px; }
.cbar .last { margin: 0 2px 0 auto; }
.log { flex: 1; }

/* inspector */
input[type=checkbox] { appearance: none; width: 15px; height: 15px; background: #262626; border: 1px solid #1b1b1b; border-radius: 3px; flex: none; display: grid; place-items: center; }
input[type=checkbox]:checked::before { content: ""; width: 11px; height: 9px; background: #fd942b; clip-path: polygon(0 50%, 18% 32%, 38% 55%, 82% 4%, 100% 22%, 38% 100%); }
.ibody { padding: 0 9px 0 0; }
.name { display: flex; align-items: center; height: 31px; padding-left: 10px; gap: 3px; }
.name .field { width: 232px; color: #fd942b; }
.name span { margin-left: 9px; font-size: 10px; }
.sect { display: flex; align-items: center; margin: 0 0 0 4px; height: 29px; font-size: 12px; font-weight: 700; border-bottom: 1px solid #666; }
.sect.top { padding-top: 4px; }
.tri { width: 7px; height: 7px; margin: 0 5px 0 1px; background: #bdbdbd; clip-path: polygon(0 0, 100% 0, 50% 100%); flex: none; }
.sect .cog { margin: 0 5px 0 auto; }
.comp { height: 27px; margin-top: 13px; }
.comp input { margin-right: 3px; }
.comp .book { margin-left: auto; }
.comp .cog { margin-left: 15px; }
.rows { padding: 4px 0 0 17px; }
.row { display: flex; align-items: center; height: 27px; }
.lab { width: 92px; flex: none; }
.xy { flex: 1; min-width: 0; display: grid; grid-template-columns: minmax(0, 1fr) minmax(0, 1fr); gap: 10px; }
.xy label { display: flex; align-items: center; min-width: 0; font-family: "Liberation Mono", monospace; }
.xy .num { margin-left: 9px; }
.num { flex: 1; min-width: 0; display: flex; height: 22px; background: #262626; border: 1px solid #8a8a8a; border-radius: 3px; overflow: hidden; }
.num input { flex: 1; width: 0; min-width: 0; padding-left: 7px; color: #fd942b; font-family: "Liberation Sans", sans-serif; }
.num i { flex: none; width: 11px; background: linear-gradient(#333, #333) center / 100% 1px no-repeat #585858; position: relative; }
.num i::before, .num i::after { content: ""; position: absolute; left: 3px; border: 3px solid transparent; }
.num i::before { top: 4px; border-bottom-color: #262626; border-top: 0; }
.num i::after { bottom: 4px; border-top-color: #262626; border-bottom: 0; }
.color { flex: 1; height: 21px; background: #fff; border: 1px solid #111; display: flex; flex-direction: column; justify-content: flex-end; }
.color i { height: 5px; border-top: 1px solid #111; }
.grp { width: 122px; margin-right: 3px; }
.blueb { height: 21px; background: #4281b6; color: #fff; border: 1px solid #111; border-radius: 2px; font-weight: 700; }
.edit { flex: 1; }
.ref { display: flex; align-items: flex-end; height: 30px; padding-left: 17px; }
.ref > .lab { line-height: 21px; }
.ref.in > .lab { padding-left: 13px; }
.ref.first { margin-top: 7px; }
.slot { flex: 1; min-width: 0; display: grid; grid-template-columns: 160px 1fr; }
.slot.small { flex: none; width: 60px; grid-template-columns: 38px 1fr; }
.tag { grid-column: 1 / -1; justify-self: start; height: 10px; display: flex; align-items: center; gap: 2px; padding: 0 7px 0 6px; background: #262626; border-radius: 3px 3px 0 0; font: 700 9px/10px "Liberation Sans", sans-serif; white-space: nowrap; }
.node .tag { padding-left: 8px; }
.tag svg { color: #4281b6; }
.tag b { width: 5px; height: 5px; background: #090; }
.val { height: 20px; line-height: 18px; background: #4281b6; border: 1px solid #1b1b1b; border-right: 0; color: #222; padding-left: 4px; white-space: nowrap; overflow: hidden; }
.node .val { background: #bdbdbd; }
.del { height: 20px; background: #262626; display: grid; place-items: center start; padding-left: 6px; border-radius: 0 3px 3px 0; }
.small .del { padding-left: 7px; }
.resize { display: block; width: 115px; margin: 9px 0 0 auto; font-size: 11px; }
.rows.two { padding-top: 8px; }
.tran { flex: 1; }
.refs { display: grid; gap: 5px; padding-top: 3px; }
.ev { padding: 3px 0 0 4px; }
.ev .lab { width: 92px; }
.evt { margin-top: 1px; }
.hot, .custom { color: #fd942b; }
.s1 { width: 58px; margin: 0 3px; }
.s2 { flex: 1; border: 1px solid #fd942b; }
.s1 select, .s2 select { padding-right: 22px; padding-left: 10px; }
.s2 select { padding-right: 18px; }
.custom { display: flex; align-items: center; margin: 8px 0 0 109px; gap: 10px; }
.custom .field { flex: 1; min-width: 0; }
.add { display: block; width: 240px; height: 26px; margin: 22px 0 0 27px; border: 1px solid #222; border-radius: 3px; background: #4c4c4c; font-weight: 500; }

/* tutorial callouts laid over the editor */
.notes { position: absolute; inset: 0; pointer-events: none; overflow: hidden; }
.note { position: absolute; display: flex; align-items: center; gap: 9px; white-space: nowrap; font: 16px/34px "Noto Sans", "Noto Sans CJK SC", sans-serif; color: #fff; }
.note b { width: 20px; height: 20px; border-radius: 50%; background: #fc3a38; font: 13px/20px "Noto Sans", sans-serif; text-align: center; }
.note span { position: relative; height: 34px; padding: 0 14px 0 5px; background: rgba(13, 13, 13, .76); border-radius: 3px; }
.note span::before { content: ""; position: absolute; left: -5px; top: 12px; border: 5px solid transparent; border-right-color: rgba(13, 13, 13, .76); border-left: 0; }
.n1 { left: 190px; top: 122px; }
.n2 { left: 245px; top: 66px; }
.n2 span { padding-right: 19px; }
.n3 { left: 1531px; top: 559px; }
```
